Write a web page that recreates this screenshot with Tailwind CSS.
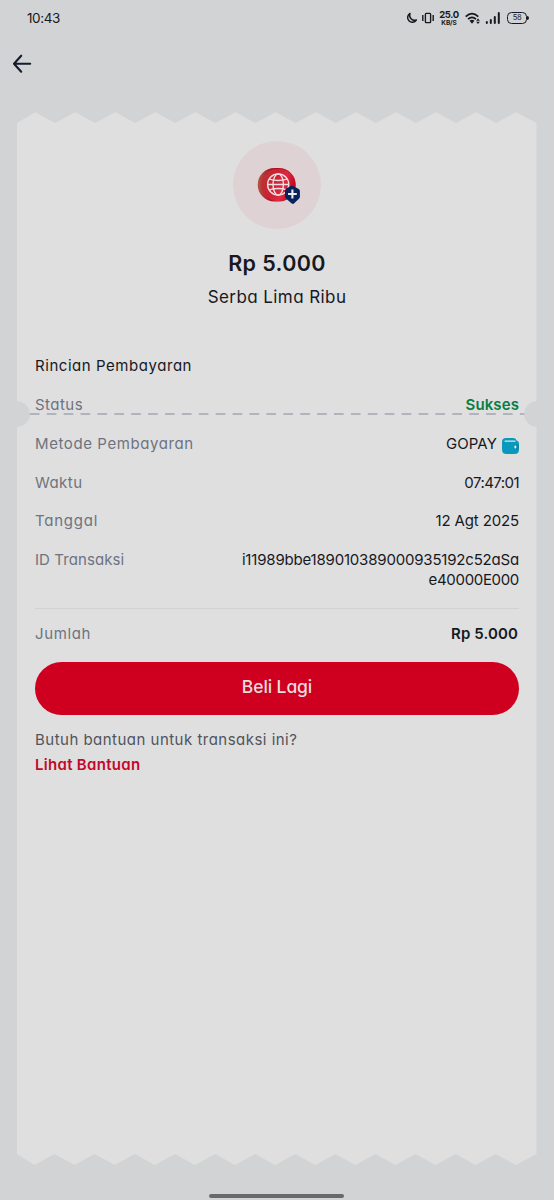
<!DOCTYPE html>
<html lang="id">
<head>
<meta charset="utf-8">
<title>Rincian Pembayaran</title>
<script src="https://cdn.jsdelivr.net/npm/@tailwindcss/browser@4"></script>
</head>
<body class="bg-[#d1d3d5]">
<div class="relative flex h-[1200px] w-[554px] flex-col overflow-hidden bg-[#d1d3d5] font-['Inter','Liberation_Sans',sans-serif] text-[15px] leading-5 text-[#17191f] [font-feature-settings:'cv11']">

  <!-- Status bar -->
  <header class="flex h-9 shrink-0 items-center pl-[27px] pr-[25px]">
    <span class="text-[13.5px] tracking-[-0.4px]">10:43</span>
    <div class="ml-auto flex items-center">
      <svg class="h-3 w-3" viewBox="0 0 12 12" fill="none" stroke="#17191f" stroke-width="1.5" stroke-linejoin="round"><path d="M4 1.4A4.7 4.7 0 1 0 10.3 8A5 5 0 0 1 4 1.4Z"/></svg>
      <svg class="ml-[4px] h-3 w-3" viewBox="0 0 12 12" fill="none" stroke="#17191f" stroke-width="1.4"><rect x="3.4" y="1.4" width="5.2" height="9.2" rx=".8"/><path d="M.8 3v6M11.2 3v6"/></svg>
      <div class="ml-[5px] flex w-5 flex-col items-center">
        <span class="text-[9.5px] font-bold leading-[10px] tracking-[-0.4px]">25.0</span>
        <span class="text-[6.5px] font-bold leading-[6px] tracking-[-0.1px]">KB/S</span>
      </div>
      <svg class="ml-[6px] h-[13px] w-4" viewBox="0 0 16 12" fill="none" stroke="#17191f" stroke-width="1.7"><path d="M.7 4.2Q7 -1.8 13.3 4.2M3 6.7Q7 3 11 6.7"/><path d="M4.5 8.3Q7 6.2 9.5 8.3L7 11.2Z" fill="#17191f" stroke="none"/><path d="M13 5.9l1.9 2.4h-3.8zM13 11.6l1.9-2.4h-3.8z" fill="#17191f" stroke="none"/></svg>
      <svg class="ml-[4px] h-3 w-4" viewBox="0 0 16 12" fill="#17191f"><rect x=".8" y="9" width="2" height="3" rx="1"/><rect x="4.8" y="7" width="2" height="5" rx="1"/><rect x="8.8" y="4" width="2" height="8" rx="1"/><rect x="12.8" y="0" width="2" height="12" rx="1"/></svg>
      <div class="ml-[6px] flex items-center">
        <span class="flex h-3 w-5 items-center justify-center rounded-[4.5px] border-[1.4px] border-[#17191f] text-[7.5px] leading-none tracking-[-0.4px]">58</span>
        <span class="h-1 w-[2px] rounded-r-full bg-[#17191f]"></span>
      </div>
    </div>
  </header>

  <!-- Navigation -->
  <nav class="h-[76px] shrink-0 pl-3 pt-[17px]">
    <button class="block" aria-label="Kembali">
      <svg class="h-[22px] w-5" viewBox="0 0 20 22" fill="none" stroke="#141c2e" stroke-width="2.1" stroke-linecap="round" stroke-linejoin="round"><path d="M18.2 10.7H2.2M9.2 2.7L2 10.7L9.2 18.7"/></svg>
    </button>
  </nav>

  <!-- Receipt -->
  <main class="relative mx-[17px] flex h-[1053px] shrink-0 flex-col px-[18px]">
    <svg class="absolute left-0 top-0 h-[1053px] w-[520px]" viewBox="0 0 520 1053">
      <path id="paper" fill="#dfdfdf"/>
      <circle cx="0" cy="302" r="12.8" fill="#d1d3d5"/>
      <circle cx="520" cy="302" r="12.8" fill="#d1d3d5"/>
      <path d="M12.8 302H507.3" stroke="#a2a7b1" stroke-width="1.7" stroke-dasharray="9.7 7.2"/>
    </svg>

    <section class="relative flex flex-col items-center pt-[29px]">
      <div class="flex h-[88px] w-[88px] items-center justify-center rounded-full bg-[#dfd2d5]">
        <svg class="mr-px h-[87px] w-[87px]" viewBox="0 0 87 87" fill="none">
          <defs>
            <linearGradient id="edge" x1="0" y1="0" x2="1" y2="0"><stop stop-color="#b55443"/><stop offset=".35" stop-color="#a81521"/><stop offset="1" stop-color="#bd0d20"/></linearGradient>
            <linearGradient id="face" x1="0" y1="0" x2="1" y2=".3"><stop stop-color="#b03a35"/><stop offset=".45" stop-color="#cf2033"/><stop offset=".75" stop-color="#dc2a40"/><stop offset="1" stop-color="#c80c25"/></linearGradient>
          </defs>
          <rect x="24.7" y="26" width="38" height="33.5" rx="16.7" fill="url(#edge)"/>
          <rect x="28" y="27" width="34.4" height="32" rx="16" fill="url(#face)"/>
          <g stroke="#efdfe1" stroke-width="1.4"><circle cx="45.2" cy="42.5" r="10.6"/><ellipse cx="45.2" cy="42.5" rx="5.2" ry="10.6"/><path d="M36.3 37.2Q45.2 39.8 54.1 37.2M36.3 47.8Q45.2 45.2 54.1 47.8M34.6 42.5H55.8"/></g>
          <path d="M52 49.5Q51.7 47.8 53 46.8L57.7 43.9Q59 43.2 60.2 43.9L65.7 46.9Q67 47.7 66.9 49.2V54.7Q66.9 56 65.7 57L60.4 61.9L58.7 61.4L53.3 56.7Q52 55.6 52 54.5Z" fill="#07245c"/>
          <path d="M59.4 47.6V56.4M55 52H63.8" stroke="#eceef2" stroke-width="2.1"/>
        </svg>
      </div>
      <h1 class="mt-[18px] text-[21.5px] font-semibold leading-8 tracking-[0.36px]">Rp 5.000</h1>
      <p class="mt-1 text-[17px] leading-7 tracking-[0.42px]">Serba Lima Ribu</p>
    </section>

    <section class="relative mt-[45px] flex flex-col">
      <h2 class="tracking-[0.55px]">Rincian Pembayaran</h2>
      <dl class="mt-[19px] text-[#6d7380]">
        <div class="flex justify-between"><dt class="tracking-[0.46px]">Status</dt><dd class="font-semibold tracking-[0.1px] text-[#087d43]">Sukses</dd></div>
        <div class="mt-[19px] flex justify-between"><dt class="tracking-[0.59px]">Metode Pembayaran</dt>
          <dd class="flex items-center gap-[5px] tracking-[0.1px] text-[#17191f]">GOPAY
            <svg class="mt-[3px] h-4 w-[17px]" viewBox="0 0 17 16"><path d="M4 0H11.5Q14.2 0 14.5 2.5Q17 3 17 6V11.5Q17 16 12.5 16H4.5Q0 16 0 11.5V4Q0 0 4 0Z" fill="#0899bd"/><path d="M3 3.1H13" stroke="#dce7ea" stroke-width="1.2" stroke-linecap="round"/><path d="M17 6.6H14Q11.8 6.8 11.8 9Q11.8 11.2 14 11.4H17Z" fill="#078bad"/><rect x="12.4" y="7.5" width="1.9" height="3" rx=".9" fill="#e8eeef"/></svg>
          </dd>
        </div>
        <div class="mt-[19px] flex justify-between"><dt class="tracking-[0.45px]">Waktu</dt><dd class="tracking-[-0.55px] text-[#17191f]">07:47:01</dd></div>
        <div class="mt-[18px] flex justify-between"><dt class="tracking-[0.75px]">Tanggal</dt><dd class="tracking-[-0.14px] text-[#17191f]">12 Agt 2025</dd></div>
        <div class="mt-[19px] flex justify-between"><dt class="tracking-[0.08px]">ID Transaksi</dt><dd class="text-right text-[#17191f]"><span class="tracking-[-0.19px]">i11989bbe189010389000935192c52aSa</span><br><span class="tracking-[-0.33px]">e40000E000</span></dd></div>
        <div class="mt-[18px] flex justify-between border-t border-[#d0d2d5] pt-[15px]"><dt class="tracking-[0.62px]">Jumlah</dt><dd class="mr-px font-semibold tracking-[0.12px] text-[#17191f]">Rp 5.000</dd></div>
      </dl>
      <button class="mt-[18px] h-[53px] rounded-full bg-[#cf001f] pb-1 text-[17.5px] font-medium tracking-[-0.1px] text-[#eadcdf]">Beli Lagi</button>
      <p class="mt-[15px] tracking-[0.48px] text-[#50545b]">Butuh bantuan untuk transaksi ini?</p>
      <a class="mt-[5px] font-semibold tracking-[0.3px] text-[#c4082b]">Lihat Bantuan</a>
    </section>
  </main>

  <!-- Gesture bar -->
  <footer class="mt-auto flex justify-center pb-[2px] pr-[2px]"><span class="h-1 w-[135px] rounded-full bg-[#696969]"></span></footer>
</div>
<script>
  // Serrated paper outline: thirteen teeth along both edges
  const step = 40.1;
  let d = 'M0 11';
  for (let i = 0; i < 13; i++) d += `L${18 + i * step} .3L${i < 12 ? 38 + i * step : 519.5} 11`;
  d += 'V1042';
  for (let i = 12; i >= 0; i--) d += `L${17.5 + i * step} 1053L${i > 0 ? i * step - 2.5 : 0} 1042`;
  document.getElementById('paper').setAttribute('d', d + 'Z');
</script>
</body>
</html>
